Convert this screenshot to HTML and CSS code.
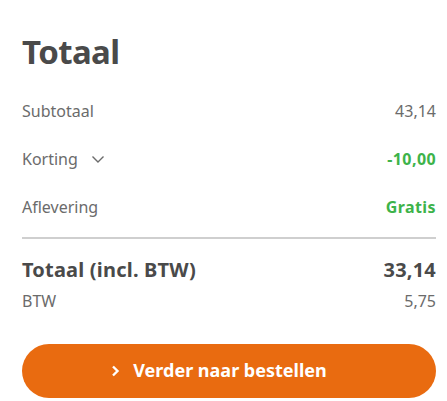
FILE: index.html
```html
<!DOCTYPE html>
<html lang="nl">
<head>
<meta charset="utf-8">
<link rel="stylesheet" href="styles.css">
</head>
<body>
<div class="summary">
  <h1 class="title">Totaal</h1>
  <div class="row"><span class="label">Subtotaal</span><span class="value">43,14</span></div>
  <div class="row"><span class="label">Korting <svg class="chev" width="14" height="9" viewBox="0 0 14 9"><path d="M1.5 1.5 L7 7 L12.5 1.5" fill="none" stroke="#6b6b6b" stroke-width="1.4"/></svg></span><span class="value green">-10,00</span></div>
  <div class="row"><span class="label">Aflevering</span><span class="value green">Gratis</span></div>
  <div class="divider"></div>
  <div class="total-row"><span>Totaal (incl. BTW)</span><span>33,14</span></div>
  <div class="btw-row"><span>BTW</span><span>5,75</span></div>
  <button class="cta"><svg class="cta-chev" width="9" height="12" viewBox="0 0 9 12"><path d="M2 1.5 L6.5 6 L2 10.5" fill="none" stroke="#fff" stroke-width="2.4"/></svg>Verder naar bestellen</button>
</div>
</body>
</html>
```

FILE: styles.css
```css
* { box-sizing: border-box; }
body { margin: 0; background: #fff; font-family: "Noto Sans", "Open Sans", sans-serif; }
.summary { padding: 29px 11px 0 22px; display: flex; flex-direction: column; }
.title { margin: 0 0 12px; font-size: 33px; line-height: 46px; font-weight: 700; color: #4a4a4a; letter-spacing: -0.6px; }
.row { display: flex; justify-content: space-between; align-items: center; height: 48px; font-size: 16px; color: #6b6b6b; }
.label { display: flex; align-items: center; gap: 13px; }
.value { color: #6b6b6b; }
.green { color: #3db34a; font-weight: 700; letter-spacing: 0.4px; }
.divider { height: 2px; background: #cfcfcf; margin: 6px 0 0; }
.total-row { display: flex; justify-content: space-between; font-size: 20px; font-weight: 700; color: #4a4a4a; margin-top: 17px; line-height: 28px; letter-spacing: 0.2px; }
.btw-row { display: flex; justify-content: space-between; font-size: 16px; color: #6b6b6b; line-height: 22px; margin-top: 6px; }
.cta { margin-top: 32px; height: 54px; border: 0; border-radius: 27px; background: #e96b10; color: #fff; font-family: inherit; font-size: 18px; font-weight: 700; display: flex; align-items: center; justify-content: center; gap: 13px; padding: 0 20px 2px 0; }
.cta-chev { margin-top: 2px; }
```
